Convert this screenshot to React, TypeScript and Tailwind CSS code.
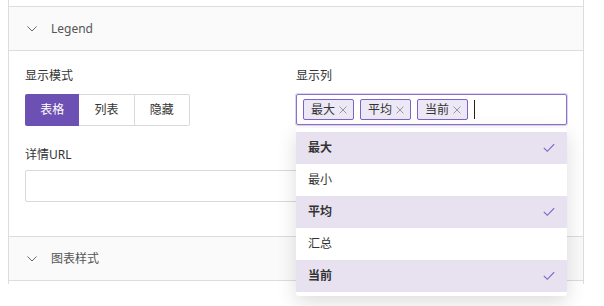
import React from 'react'

const font = { fontFamily: '"Noto Sans", "Noto Sans CJK SC", sans-serif' }

const Chevron = () => (
  <svg width="10" height="6" viewBox="0 0 10 6" className="text-[#666]">
    <path d="M0.5 0.5 L5 5 L9.5 0.5" fill="none" stroke="currentColor" strokeWidth="1" />
  </svg>
)

const Check = () => (
  <svg width="12" height="10" viewBox="0 0 12 10" className="text-[#7a5fc0]">
    <path d="M0.8 4.8 L4.3 8.3 L11.2 1.2" fill="none" stroke="currentColor" strokeWidth="1.1" />
  </svg>
)

const Tag = ({ label }: { label: string }) => (
  <span className="flex items-center h-[21px] pl-[7px] pr-[6px] gap-[4px] rounded-[2px] border border-[#7d63c3] bg-[#ece8f5] text-[12px] text-[#333]">
    {label}
    <svg width="8" height="8" viewBox="0 0 8 8" className="text-[#999]">
      <path d="M0.5 0.5 L7.5 7.5 M7.5 0.5 L0.5 7.5" fill="none" stroke="currentColor" strokeWidth="1" />
    </svg>
  </span>
)

const options = [
  { label: '最大', on: true },
  { label: '最小', on: false },
  { label: '平均', on: true },
  { label: '汇总', on: false },
  { label: '当前', on: true },
]

const Section = ({ title }: { title: string }) => (
  <div className="flex items-center gap-[14px] pl-[18px] h-full">
    <Chevron />
    <span className="text-[12px] text-[#555]">{title}</span>
  </div>
)

export default function App() {
  return (
    <div className="w-[604px] h-[306px] bg-white overflow-hidden" style={font}>
      <div className="ml-2 w-[576px] h-[284px] border-x border-[#ddd]">
        <div className="h-[7px] border-b border-[#ddd]" />
        <div className="h-[44px] bg-[#fafafa] border-b border-[#ddd]">
          <Section title="Legend" />
        </div>

        {/* Content */}
        <div className="h-[185px] px-4 pt-4">
          <div className="grid grid-cols-2">
            <div>
              <div className="h-[18px] leading-[18px] text-[12px] text-[#333] mb-[9px]">显示模式</div>
              <div className="flex h-[32px] w-[165px] text-[12px]">
                <div className="flex-1 flex items-center justify-center bg-[#6d50b3] text-white rounded-l-[2px]">表格</div>
                <div className="flex-1 flex items-center justify-center border-y border-r border-[#d9d9d9] text-[#333]">列表</div>
                <div className="flex-1 flex items-center justify-center border-y border-r border-[#d9d9d9] text-[#333] rounded-r-[2px]">隐藏</div>
              </div>
            </div>
            <div className="relative">
              <div className="h-[18px] leading-[18px] text-[12px] text-[#333] mb-[9px]">显示列</div>
              <div className="h-[31px] flex items-center gap-[6px] pl-[6px] border border-[#8a72c9] rounded-[2px] ring-1 ring-[#dcd3f0]">
                <Tag label="最大" />
                <Tag label="平均" />
                <Tag label="当前" />
                <span className="w-px h-[19px] bg-[#222]" />
              </div>
              {/* Dropdown */}
              <div className="absolute left-0 top-[61px] w-[271px] z-10 bg-white rounded-[3px] py-1 shadow-[0_6px_20px_rgba(0,0,0,0.14)]">
                {options.map((o) => (
                  <div
                    key={o.label}
                    className={`h-[32px] flex items-center justify-between pl-3 pr-3 text-[12px] text-[#333] ${o.on ? 'bg-[#e7e1f0] font-bold' : ''}`}
                  >
                    <span>{o.label}</span>
                    {o.on && <Check />}
                  </div>
                ))}
              </div>
            </div>
          </div>

          <div className="h-[18px] leading-[18px] text-[12px] text-[#333] mt-5 mb-[6px]">详情URL</div>
          <div className="h-[32px] border border-[#d9d9d9] rounded-[2px]" />
        </div>

        <div className="h-[45px] bg-[#fafafa] border-y border-[#ddd]">
          <Section title="图表样式" />
        </div>
      </div>
    </div>
  )
}
